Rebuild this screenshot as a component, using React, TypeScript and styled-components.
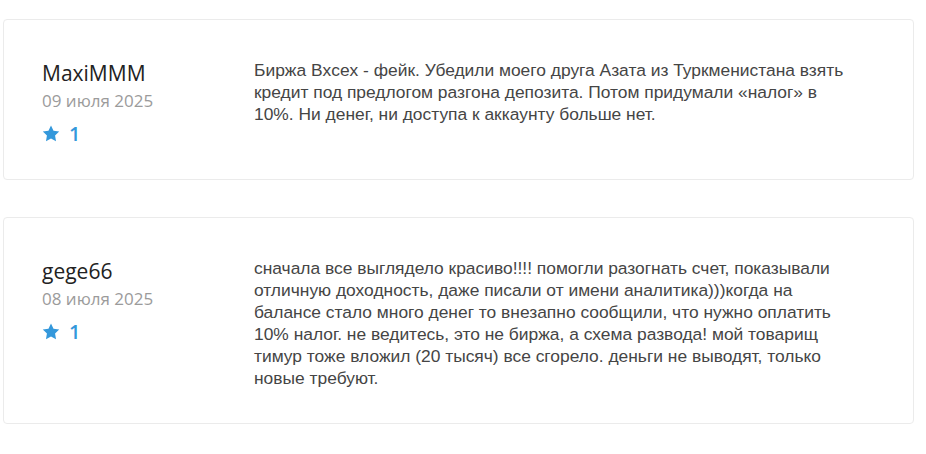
import styled, { createGlobalStyle } from "styled-components";

interface Review {
  author: string;
  date: string;
  rating: number;
  text: string;
}

const REVIEWS: Review[] = [
  {
    author: "MaxiMMM",
    date: "09 июля 2025",
    rating: 1,
    text: "Биржа Bxcex - фейк. Убедили моего друга Азата из Туркменистана взять кредит под предлогом разгона депозита. Потом придумали «налог» в 10%. Ни денег, ни доступа к аккаунту больше нет.",
  },
  {
    author: "gege66",
    date: "08 июля 2025",
    rating: 1,
    text: "сначала все выглядело красиво!!!! помогли разогнать счет, показывали отличную доходность, даже писали от имени аналитика)))когда на балансе стало много денег то внезапно сообщили, что нужно оплатить 10% налог. не ведитесь, это не биржа, а схема развода! мой товарищ тимур тоже вложил (20 тысяч) все сгорело. деньги не выводят, только новые требуют.",
  },
];

const GlobalStyle = createGlobalStyle`
  body {
    margin: 0;
    background: #ffffff;
  }
`;

const StarIcon = () => (
  <svg width="18" height="17" viewBox="0 0 24 23" aria-hidden="true">
    <path
      fill="currentColor"
      d="M12 0.8l3.4 7 7.7 1.1-5.6 5.4 1.3 7.6L12 18.3l-6.8 3.6 1.3-7.6L0.9 8.9l7.7-1.1z"
    />
  </svg>
);

const App = () => (
  <>
    <GlobalStyle />
    <List>
      {REVIEWS.map((review) => (
        <Card key={review.author}>
          <Meta>
            <Author>{review.author}</Author>
            <DateLabel>{review.date}</DateLabel>
            <Rating>
              <StarIcon />
              <span>{review.rating}</span>
            </Rating>
          </Meta>
          <Body>{review.text}</Body>
        </Card>
      ))}
    </List>
  </>
);

export default App;

const List = styled.div`
  display: flex;
  flex-direction: column;
  gap: 37px;
  padding: 19px 12px 0 3px;
`;

const Card = styled.div`
  display: flex;
  align-items: flex-start;
  padding: 39px 50px 34px 38px;
  border: 1px solid #ebebeb;
  border-radius: 4px;
  background: #ffffff;
`;

const Meta = styled.div`
  width: 212px;
  flex-shrink: 0;
  display: flex;
  flex-direction: column;
  font-family: "Open Sans", sans-serif;
`;

const Author = styled.div`
  font-size: 21px;
  line-height: 28px;
  color: #222222;
`;

const DateLabel = styled.div`
  margin-top: 3px;
  font-size: 17px;
  line-height: 22px;
  color: #9b9b9b;
`;

const Rating = styled.div`
  display: flex;
  align-items: center;
  gap: 9px;
  margin-top: 9px;
  height: 24px;
  font-size: 20px;
  font-weight: 600;
  color: #3498db;
`;

const Body = styled.p`
  margin: 0;
  max-width: 594px;
  font-family: "Liberation Sans", Arial, sans-serif;
  font-size: 17.4px;
  line-height: 22px;
  color: #454545;
`;
